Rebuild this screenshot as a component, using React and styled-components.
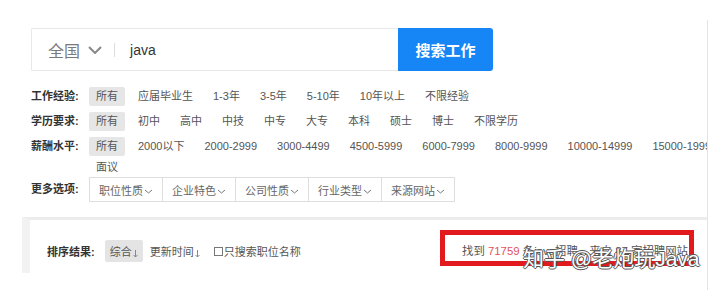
import React from 'react';
import styled, { createGlobalStyle } from 'styled-components';

const Global = createGlobalStyle`
  html, body { margin: 0; padding: 0; background: #fff; }
  body { font-family: "Liberation Sans", "Noto Sans CJK SC", sans-serif; }
  #root { width: 720px; height: 290px; }
`;

const Page = styled.div`
  position: relative;
  width: 720px;
  height: 290px;
  overflow: hidden;
  background: #fff;
  padding-top: 20px;
  box-sizing: border-box;
`;

const Panel = styled.div`
  width: 708px;
  height: 270px;
  border-right: 1px solid #e4e4e4;
  box-sizing: border-box;
  overflow: hidden;
`;

const Top = styled.div`
  padding: 8px 0 0 31px;
`;

const SearchRow = styled.div`
  display: flex;
  height: 43px;
`;

const SearchBox = styled.div`
  width: 367px;
  box-sizing: border-box;
  border: 1px solid #e8e8e8;
  border-right: none;
  border-radius: 2px 0 0 2px;
  display: flex;
  align-items: center;
  padding-left: 16px;
  background: #fff;
`;

const City = styled.span`
  font-size: 16px;
  color: #7a7a7a;
`;

const Sep = styled.span`
  width: 1px;
  height: 14px;
  background: #dcdcdc;
  margin: 0 15px 0 12px;
`;

const Query = styled.span`
  font-size: 14px;
  color: #333;
`;

const SearchButton = styled.button`
  width: 95px;
  height: 43px;
  border: none;
  border-radius: 0 3px 3px 0;
  background: #1686f7;
  color: #fff;
  font-family: inherit;
  font-size: 15px;
  font-weight: bold;
  padding: 0;
`;

const Row = styled.div`
  display: flex;
  align-items: flex-start;
  margin-top: ${p => p.$mt}px;
`;

const Label = styled.div`
  width: 58px;
  flex-shrink: 0;
  font-size: 11px;
  font-weight: bold;
  color: #333;
  line-height: ${p => p.$lh || 19}px;
  white-space: nowrap;
`;

const Items = styled.div`
  display: flex;
  flex-wrap: wrap;
  column-gap: 6px;
  row-gap: 2px;
  width: 650px;
  flex-shrink: 0;
`;

const Item = styled.span`
  padding: 0 7px;
  line-height: 19px;
  font-size: 11px;
  color: #555;
  white-space: nowrap;
  border-radius: 2px;
  background: ${p => (p.$active ? '#e6e6e6' : 'transparent')};
`;

const Drops = styled.div`
  display: flex;
`;

const Drop = styled.div`
  width: 74px;
  height: 25px;
  box-sizing: border-box;
  border: 1px solid #dedede;
  margin-left: ${p => (p.$first ? 0 : -1)}px;
  display: flex;
  align-items: center;
  padding-left: 9px;
  font-size: 11px;
  color: #666;
  background: #fff;
`;

const Card = styled.div`
  margin: 15px 0 0 22px;
  height: 56px;
  box-sizing: border-box;
  border-top: 3px solid #ececec;
  border-left: 8px solid #f2f2f2;
  display: flex;
  align-items: flex-start;
  justify-content: space-between;
  padding: 0 13px 0 17px;
  background: #fff;
`;

const SortGroup = styled.div`
  display: flex;
  align-items: center;
  margin-top: 20px;
  height: 22px;
`;

const SortLabel = styled.span`
  font-size: 11px;
  font-weight: bold;
  color: #333;
  margin-right: 10px;
`;

const SortItem = styled.span`
  display: flex;
  align-items: center;
  height: 22px;
  padding: 0 5px;
  font-size: 11px;
  color: #555;
  border-radius: 2px;
  background: ${p => (p.$active ? '#e4e4e4' : 'transparent')};
  margin-right: ${p => p.$mr || 0}px;
`;

const Check = styled.span`
  width: 7px;
  height: 7px;
  border: 1px solid #777;
  margin-right: 1px;
`;

const Result = styled.div`
  margin-top: 10px;
  width: 254px;
  height: 36px;
  box-sizing: border-box;
  border: 5px solid #e21a1d;
  padding: 9px 0 0 17px;
  font-size: 11.4px;
  line-height: 14px;
  color: #555;
  white-space: nowrap;
`;

const Num = styled.span`
  color: #e0545c;
`;

const Watermark = styled.div`
  position: absolute;
  left: 523px;
  top: 246px;
  font-size: 21px;
  line-height: 26px;
  color: #fff;
  white-space: nowrap;
  text-shadow: 1px 0 0 #555, -1px 0 0 #555, 0 1px 0 #555, 0 -1px 0 #555;
`;

const Chevron = ({ w = 14, h = 8, sw = 2, color = '#888' }) => (
  <svg width={w} height={h} viewBox={`0 0 ${w} ${h}`} style={{ display: 'block' }}>
    <polyline points={`1,1 ${w / 2},${h - 1} ${w - 1},1`} fill="none" stroke={color} strokeWidth={sw} />
  </svg>
);

const SortArrow = () => (
  <svg width="5" height="9" viewBox="0 0 5 9" style={{ display: 'block', marginLeft: 1, marginTop: 4 }}>
    <line x1="2.5" y1="1" x2="2.5" y2="8" stroke="#888" strokeWidth="1" />
    <polyline points="0.5,6 2.5,8 4.5,6" fill="none" stroke="#888" strokeWidth="1" />
  </svg>
);

const rows = [
  { label: '工作经验:', items: ['所有', '应届毕业生', '1-3年', '3-5年', '5-10年', '10年以上', '不限经验'] },
  { label: '学历要求:', items: ['所有', '初中', '高中', '中技', '中专', '大专', '本科', '硕士', '博士', '不限学历'] },
  {
    label: '薪酬水平:',
    items: ['所有', '2000以下', '2000-2999', '3000-4499', '4500-5999', '6000-7999', '8000-9999', '10000-14999', '15000-19999', '面议'],
  },
];

const drops = ['职位性质', '企业特色', '公司性质', '行业类型', '来源网站'];

export default function App() {
  return (
    <>
      <Global />
      <Page>
        <Panel>
          <Top>
            <SearchRow>
              <SearchBox>
                <City>全国</City>
                <span style={{ marginLeft: 8 }}>
                  <Chevron w={14} h={8} sw={2} color="#888" />
                </span>
                <Sep />
                <Query>java</Query>
              </SearchBox>
              <SearchButton>搜索工作</SearchButton>
            </SearchRow>
            {rows.map((r, i) => (
              <Row key={r.label} $mt={i === 0 ? 16 : 6}>
                <Label>{r.label}</Label>
                <Items>
                  {r.items.map((it, j) => (
                    <Item key={it} $active={j === 0}>
                      {it}
                    </Item>
                  ))}
                </Items>
              </Row>
            ))}
            <Row $mt={0}>
              <Label $lh={25}>更多选项:</Label>
              <Drops>
                {drops.map((d, i) => (
                  <Drop key={d} $first={i === 0}>
                    {d}
                    <span style={{ marginLeft: 1, marginTop: 3 }}>
                      <Chevron w={9} h={5} sw={1} color="#777" />
                    </span>
                  </Drop>
                ))}
              </Drops>
            </Row>
          </Top>
          <Card>
            <SortGroup>
              <SortLabel>排序结果:</SortLabel>
              <SortItem $active $mr={2}>
                综合
                <SortArrow />
              </SortItem>
              <SortItem $mr={4}>
                更新时间
                <SortArrow />
              </SortItem>
              <SortItem>
                <Check />
                只搜索职位名称
              </SortItem>
            </SortGroup>
            <Result>
              找到 <Num>71759</Num> 条java招聘，来自 87 家招聘网站
            </Result>
          </Card>
        </Panel>
        <Watermark>知乎 @老炮玩Java</Watermark>
      </Page>
    </>
  );
}
